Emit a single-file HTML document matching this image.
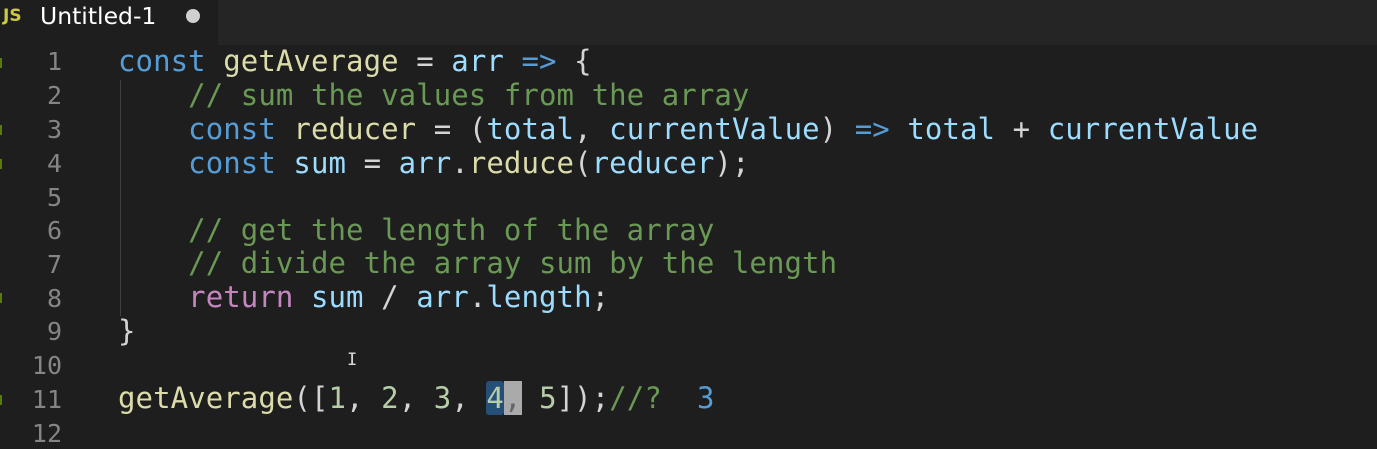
<!DOCTYPE html>
<html><head><style>
body{margin:0;width:1377px;height:449px;background:#1e1e1e;overflow:hidden;font-family:"DejaVu Sans Mono","Liberation Mono",monospace}
.bar{position:absolute;left:0;top:0;width:1377px;height:45px;background:#252526}
.tab{position:absolute;left:0;top:0;width:218px;height:45px;background:#1e1e1e}
.js{position:absolute;left:3px;top:6px;font:bold 17px "DejaVu Sans",sans-serif;color:#cbcb41}
.tt{position:absolute;left:40px;top:2px;font:23.5px "DejaVu Sans","Liberation Sans",sans-serif;color:#fff}
.dot{position:absolute;left:186px;top:9px;width:14px;height:14px;border-radius:50%;background:#d0d0d0}
.ln{position:absolute;left:0;width:62px;text-align:right;color:#858585;font-size:25px}
.code{position:absolute;left:118px;white-space:pre;font-size:29px;color:#d4d4d4;letter-spacing:0.08px}
.k{color:#569cd6}.f{color:#dcdcaa}.v{color:#9cdcfe}.c{color:#6a9955}.n{color:#b5cea8}.r{color:#c586c0}
.g{position:absolute;left:0;width:2px;height:10px;background:#587c0c}
.guide{position:absolute;left:120px;top:80px;width:1px;height:236px;background:#404040}
</style></head><body>
<div class="bar"><div class="tab"><span class="js">JS</span><span class="tt">Untitled-1</span><span class="dot"></span></div></div>
<div class="guide"></div>
<div class="g" style="top:58px"></div><div class="g" style="top:125px"></div><div class="g" style="top:159px"></div><div class="g" style="top:293px"></div><div class="g" style="top:395px"></div>
<div class="ln" style="top:47px">1</div>
<div class="ln" style="top:81px">2</div>
<div class="ln" style="top:115px">3</div>
<div class="ln" style="top:149px">4</div>
<div class="ln" style="top:183px">5</div>
<div class="ln" style="top:216px">6</div>
<div class="ln" style="top:250px">7</div>
<div class="ln" style="top:284px">8</div>
<div class="ln" style="top:317px">9</div>
<div class="ln" style="top:351px">10</div>
<div class="ln" style="top:385px">11</div>
<div class="ln" style="top:419px">12</div>
<div class="code" style="top:44px"><span class="k">const</span> <span class="f">getAverage</span> = <span class="v">arr</span> <span class="k">=&gt;</span> {</div>
<div class="code" style="top:78px">    <span class="c">// sum the values from the array</span></div>
<div class="code" style="top:112px">    <span class="k">const</span> <span class="f">reducer</span> = (<span class="v">total</span>, <span class="v">currentValue</span>) <span class="k">=&gt;</span> <span class="v">total</span> + <span class="v">currentValue</span></div>
<div class="code" style="top:146px">    <span class="k">const</span> <span class="v">sum</span> = <span class="v">arr</span>.<span class="f">reduce</span>(<span class="v">reducer</span>);</div>
<div class="code" style="top:213px">    <span class="c">// get the length of the array</span></div>
<div class="code" style="top:246px">    <span class="c">// divide the array sum by the length</span></div>
<div class="code" style="top:280px">    <span class="r">return</span> <span class="v">sum</span> / <span class="v">arr</span>.<span class="v">length</span>;</div>
<div class="code" style="top:314px">}</div>
<div class="code" style="top:381px"><span class="f">getAverage</span>([<span class="n">1</span>, <span class="n">2</span>, <span class="n">3</span>, <span class="n" style="background:#264f78;border-radius:3px">4</span><span style="background:#aaa;color:#666">,</span> <span class="n">5</span>]);<span class="c">//?</span>  <span class="k">3</span></div>
<div style="position:absolute;left:347px;top:350px;color:#ddd;font-size:17px">I</div>
</body></html>
